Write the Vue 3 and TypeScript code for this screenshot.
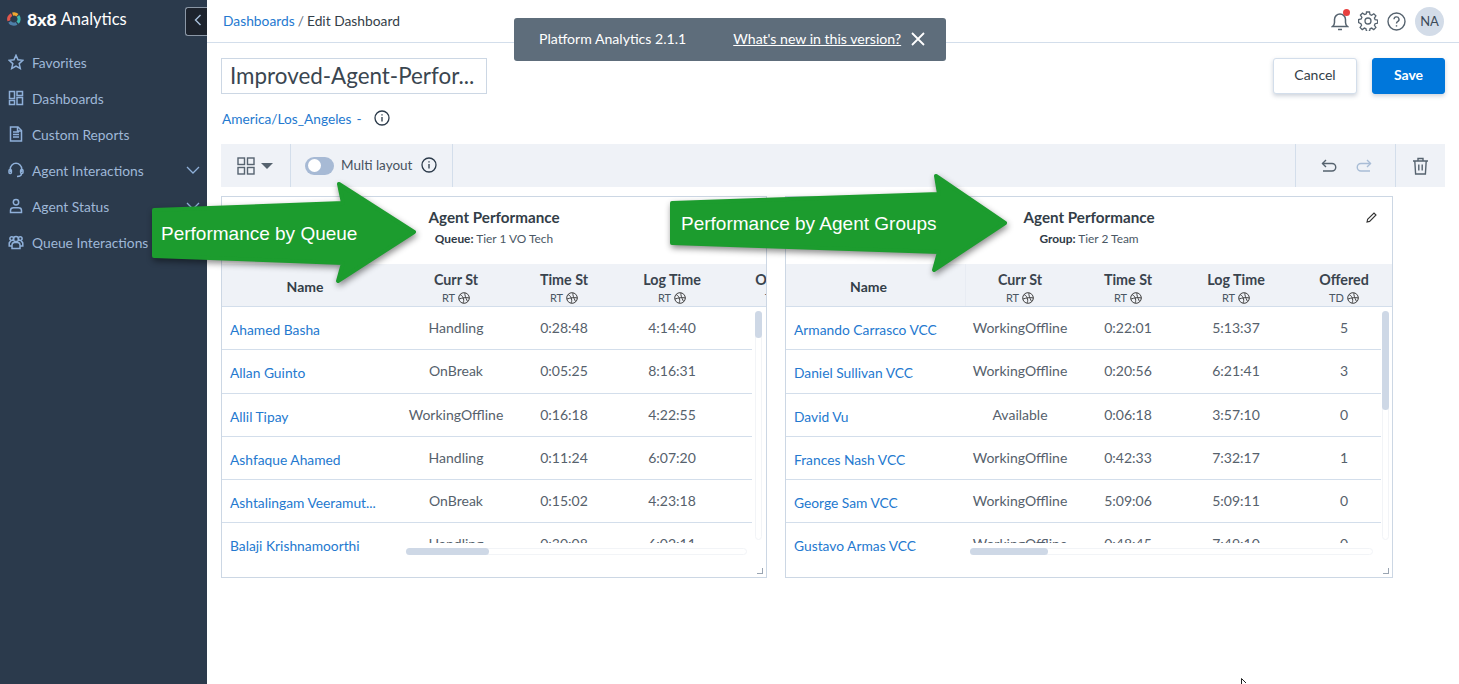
<script setup lang="ts">
type Row = { name: string; values: string[] }

interface Widget {
  id: string
  label: string
  target: string
  cols: { title: string; sub: string }[]
  rows: Row[]
  thumbH: number
  hLeft: number
  hThumb: number
  edit: boolean
}

const nav = [
  { label: 'Favorites', icon: 'star', more: false },
  { label: 'Dashboards', icon: 'grid', more: false },
  { label: 'Custom Reports', icon: 'doc', more: false },
  { label: 'Agent Interactions', icon: 'headset', more: true },
  { label: 'Agent Status', icon: 'user', more: true },
  { label: 'Queue Interactions', icon: 'users', more: false },
]

const widgets: Widget[] = [
  {
    id: 'queue',
    label: 'Queue:',
    target: 'Tier 1 VO Tech',
    cols: [
      { title: 'Curr St', sub: 'RT' },
      { title: 'Time St', sub: 'RT' },
      { title: 'Log Time', sub: 'RT' },
      { title: 'Offered', sub: 'TD' },
    ],
    rows: [
      { name: 'Ahamed Basha', values: ['Handling', '0:28:48', '4:14:40', '2'] },
      { name: 'Allan Guinto', values: ['OnBreak', '0:05:25', '8:16:31', '4'] },
      { name: 'Allil Tipay', values: ['WorkingOffline', '0:16:18', '4:22:55', '1'] },
      { name: 'Ashfaque Ahamed', values: ['Handling', '0:11:24', '6:07:20', '3'] },
      { name: 'Ashtalingam Veeramut...', values: ['OnBreak', '0:15:02', '4:23:18', '2'] },
      { name: 'Balaji Krishnamoorthi', values: ['Handling', '0:30:08', '6:02:11', '5'] },
    ],
    thumbH: 27,
    hLeft: 184,
    hThumb: 83,
    edit: false,
  },
  {
    id: 'group',
    label: 'Group:',
    target: 'Tier 2 Team',
    cols: [
      { title: 'Curr St', sub: 'RT' },
      { title: 'Time St', sub: 'RT' },
      { title: 'Log Time', sub: 'RT' },
      { title: 'Offered', sub: 'TD' },
    ],
    rows: [
      { name: 'Armando Carrasco VCC', values: ['WorkingOffline', '0:22:01', '5:13:37', '5'] },
      { name: 'Daniel Sullivan VCC', values: ['WorkingOffline', '0:20:56', '6:21:41', '3'] },
      { name: 'David Vu', values: ['Available', '0:06:18', '3:57:10', '0'] },
      { name: 'Frances Nash VCC', values: ['WorkingOffline', '0:42:33', '7:32:17', '1'] },
      { name: 'George Sam VCC', values: ['WorkingOffline', '5:09:06', '5:09:11', '0'] },
      { name: 'Gustavo Armas VCC', values: ['WorkingOffline', '0:48:45', '7:49:10', '0'] },
    ],
    thumbH: 99,
    hLeft: 184,
    hThumb: 78,
    edit: true,
  },
]
</script>

<template>
  <div class="app">
    <aside class="side">
      <div class="brand">
        <svg class="logo" width="14" height="14" viewBox="0 0 14 14" fill="none" stroke-width="3.2">
          <path d="M2 8.800A5 5 0 0 1 4.600 2.600" stroke="#e2574c" />
          <path d="M5.600 2.100A5 5 0 0 1 10.400 3.200" stroke="#f0a830" />
          <path d="M11 4A5 5 0 0 1 10.600 10.600" stroke="#3fb7b0" />
          <path d="M9.600 11.300A5 5 0 0 1 2.600 9.800" stroke="#4e7fa8" />
        </svg>
        <span class="brand-8">8x8</span>
        <span class="brand-name">Analytics</span>
      </div>
      <button class="collapse">
        <svg width="8" height="12" viewBox="0 0 8 12" fill="none" stroke="#a9c0dc" stroke-width="1.4">
          <path d="M6.500 1 1.500 6l5 5" />
        </svg>
      </button>
      <ul class="nav">
        <li v-for="item in nav" :key="item.label" class="nav-item">
          <svg class="nav-icon" width="16" height="16" viewBox="0 0 16 16" fill="none" stroke="#8fb0d9" stroke-width="1.5">
            <path v-if="item.icon === 'star'" d="M8 1.300l2 4.500 4.900.5-3.700 3.300 1.100 4.800L8 12l-4.300 2.400 1.100-4.800L1.100 6.300 6 5.800z" />
            <g v-else-if="item.icon === 'grid'">
              <rect x="1.500" y="1.500" width="5" height="7" />
              <rect x="9" y="1.500" width="5.500" height="4" />
              <rect x="1.500" y="10.500" width="5" height="4" />
              <rect x="9" y="7.500" width="5.500" height="7" />
            </g>
            <g v-else-if="item.icon === 'doc'">
              <path d="M2.500 1h7.500l3.500 3.500V15h-11z" />
              <path d="M5 6h6M5 8.500h6M5 11h6M9.500 1v4h4" />
            </g>
            <g v-else-if="item.icon === 'headset'">
              <path d="M2.300 10V7a5.700 5.700 0 0 1 11.400 0v3" />
              <rect x="1" y="7.500" width="2.400" height="4" rx="1" />
              <rect x="12.600" y="7.500" width="2.400" height="4" rx="1" />
              <path d="M13.500 11.500c0 2-2 3-4.500 3" />
            </g>
            <g v-else-if="item.icon === 'user'">
              <circle cx="8" cy="4.200" r="2.700" />
              <path d="M2.500 14.500v-2c0-1.600 1.500-2.700 3-2.700h5c1.500 0 3 1.100 3 2.700v2z" />
            </g>
            <g v-else>
              <circle cx="8" cy="5" r="2.600" />
              <circle cx="3.800" cy="4.600" r="1.900" />
              <circle cx="12.200" cy="4.600" r="1.900" />
              <path d="M4 14.500V11c0-1.500 1.200-2.600 2.600-2.600h2.800c1.400 0 2.600 1.100 2.600 2.600v3.500z" />
              <path d="M4 12H1.200V9.500c0-1.200.9-2 2-2M12 12h2.800V9.500c0-1.200-.9-2-2-2" />
            </g>
          </svg>
          <span class="nav-label">{{ item.label }}</span>
          <svg v-if="item.more" class="nav-more" width="14" height="8" viewBox="0 0 14 8" fill="none" stroke="#8fb0d9" stroke-width="1.3">
            <path d="M1 1l6 6 6-6" />
          </svg>
        </li>
      </ul>
    </aside>

    <main class="main">
      <header class="top">
        <div class="crumbs">
          <a class="link">Dashboards</a>
          <span class="slash">/</span>
          <span>Edit Dashboard</span>
        </div>
        <div class="top-icons">
          <span class="bell">
            <svg width="18" height="20" viewBox="0 0 18 20" fill="none" stroke="#56636f" stroke-width="1.5">
              <path d="M1.500 15.500c1.300-1 2-2 2-4V8.500a5.500 5.500 0 0 1 11 0v3c0 2 .7 3 2 4z" />
              <path d="M7 18.500h4" />
            </svg>
            <i class="bell-dot"></i>
          </span>
          <svg width="20" height="20" viewBox="0 0 20 20" fill="none" stroke="#56636f" stroke-width="1.3">
            <circle cx="10" cy="10" r="3" />
            <path d="M8.500 1h3l.5 2.600 1.600.7 2.200-1.500 2.100 2.100-1.500 2.200.7 1.600 2.600.5v3l-2.600.5-.7 1.600 1.500 2.200-2.100 2.100-2.200-1.500-1.600.7-.5 2.600h-3l-.5-2.600-1.600-.7-2.200 1.500-2.100-2.100 1.500-2.200-.7-1.600L.6 11.500v-3l2.600-.5.7-1.600-1.500-2.200 2.100-2.100 2.200 1.500 1.600-.7z" />
          </svg>
          <svg width="19" height="19" viewBox="0 0 19 19" fill="none" stroke="#56636f" stroke-width="1.4">
            <circle cx="9.500" cy="9.500" r="8.500" />
            <path d="M7 7.300a2.500 2.500 0 1 1 3.600 2.300c-.8.4-1.100 1-1.100 1.900" />
            <path d="M9.500 13.200v1.400" />
          </svg>
          <span class="avatar">NA</span>
        </div>
      </header>

      <div class="content">
        <div class="title-row">
          <div class="title-input">Improved-Agent-Perfor...</div>
          <div class="actions">
            <button class="btn">Cancel</button>
            <button class="btn primary">Save</button>
          </div>
        </div>

        <div class="tz">
          <a class="link">America/Los_Angeles</a>
          <span class="tz-dash">-</span>
          <svg class="info" width="16" height="16" viewBox="0 0 16 16" fill="none" stroke="#2b3a4a" stroke-width="1.3">
            <circle cx="8" cy="8" r="7" />
            <path d="M8 7v4.500M8 4.200v1.400" />
          </svg>
        </div>

        <div class="toolbar">
          <div class="tool layout">
            <svg width="18" height="18" viewBox="0 0 18 18" fill="none" stroke="#56636f" stroke-width="1.4">
              <rect x="1" y="1" width="6.500" height="6.500" />
              <rect x="10.500" y="1" width="6.500" height="6.500" />
              <rect x="1" y="10.500" width="6.500" height="6.500" />
              <rect x="10.500" y="10.500" width="6.500" height="6.500" />
            </svg>
            <i class="caret"></i>
          </div>
          <div class="tool multi">
            <span class="switch"><i></i></span>
            <span class="multi-label">Multi layout</span>
            <svg width="16" height="16" viewBox="0 0 16 16" fill="none" stroke="#2b3a4a" stroke-width="1.3">
              <circle cx="8" cy="8" r="7" />
              <path d="M8 7v4.500M8 4.200v1.400" />
            </svg>
          </div>
          <div class="tool history">
            <svg width="16" height="14" viewBox="0 0 16 14" fill="none" stroke="#56636f" stroke-width="1.4">
              <path d="M5 1 1.500 4.500 5 8" />
              <path d="M1.500 4.500H11a3.600 3.600 0 0 1 0 7.500H2" />
            </svg>
            <svg width="16" height="14" viewBox="0 0 16 14" fill="none" stroke="#a9bdd6" stroke-width="1.4">
              <path d="M11 1l3.500 3.500L11 8" />
              <path d="M14.500 4.500H5a3.600 3.600 0 0 0 0 7.500h9" />
            </svg>
          </div>
          <div class="tool trash">
            <svg width="17" height="18" viewBox="0 0 17 18" fill="none" stroke="#56636f" stroke-width="1.4">
              <path d="M1 4h15M6 4V1.500h5V4M2.800 4l.8 13h9.800l.8-13M6.800 7.500v6M10.200 7.500v6" />
            </svg>
          </div>
        </div>

        <div class="widgets">
          <section v-for="w in widgets" :key="w.id" class="widget" :class="w.id">
            <div class="w-head">
              <div class="w-title">Agent Performance</div>
              <div class="w-sub"><b>{{ w.label }}</b> {{ w.target }}</div>
              <svg v-if="w.edit" class="w-edit" width="11" height="11" viewBox="0 0 11 11" fill="none" stroke="#333" stroke-width="1.1">
                <path d="M1 10l.6-2.600L8 1l2 2-6.400 6.400z" />
              </svg>
            </div>
            <div class="t-head">
              <div class="th name-th">Name</div>
              <div v-for="c in w.cols" :key="c.title" class="th">
                <div class="th-title">{{ c.title }}</div>
                <div class="th-sub">
                  {{ c.sub }}
                  <svg width="12" height="12" viewBox="0 0 12 12" fill="none" stroke="#444" stroke-width="1">
                    <circle cx="6" cy="6" r="5.300" />
                    <path d="M2 2.500c2 .8 3 2.500 3.500 4.500S5.500 10 5 11M1 7c3-1 7-2 10.500-1M7 1c-.5 2 .5 4 2.500 8.500" />
                  </svg>
                </div>
              </div>
            </div>
            <div class="t-body">
              <div class="names">
                <div v-for="r in w.rows" :key="r.name" class="name-cell">
                  <a class="link">{{ r.name }}</a>
                </div>
              </div>
              <div class="cells">
                <div v-for="r in w.rows" :key="r.name" class="cell-row">
                  <div v-for="(v, i) in r.values" :key="i" class="cell">{{ v }}</div>
                </div>
              </div>
            </div>
            <div class="v-bar"><i :style="{ height: w.thumbH + 'px' }"></i></div>
            <div class="h-bar" :style="{ left: w.hLeft + 'px' }"><i :style="{ width: w.hThumb + 'px' }"></i></div>
            <i class="grip"></i>
          </section>
        </div>
      </div>
    </main>

    <div class="toast">
      <span>Platform Analytics 2.1.1</span>
      <a class="toast-link">What's new in this version?</a>
      <svg width="14" height="14" viewBox="0 0 14 14" fill="none" stroke="#fff" stroke-width="1.800">
        <path d="M1 1l12 12M13 1 1 13" />
      </svg>
    </div>

    <div class="arrow arrow-queue">
      <svg width="275" height="112" viewBox="0 0 275 112">
        <path fill="#1c9c2e" stroke="#1c9c2e" stroke-width="4" stroke-linejoin="round" d="M3 29 192 22 188 3 263 51 187 100 192 82 3 75z" />
      </svg>
      <span>Performance by Queue</span>
    </div>
    <div class="arrow arrow-group">
      <svg width="350" height="107" viewBox="0 0 350 107">
        <path fill="#1c9c2e" stroke="#1c9c2e" stroke-width="4" stroke-linejoin="round" d="M3 30 270 21 267 3 336 50 265 97 270 79 3 70z" />
      </svg>
      <span>Performance by Agent Groups</span>
    </div>

    <svg class="cursor" width="8" height="6" viewBox="0 0 8 6" fill="#fff" stroke="#222" stroke-width="1">
      <path d="M.5.500v5.500M.5.500 5 5" />
    </svg>
  </div>
</template>

<style>
html,
body {
  margin: 0;
  background: #fff;
  overflow: hidden;
}
</style>

<style scoped>
.app {
  position: relative;
  display: flex;
  width: 1459px;
  height: 684px;
  overflow: hidden;
  font-family: Lato, "Noto Sans", sans-serif;
  font-size: 14px;
  color: #333e48;
}

a {
  text-decoration: none;
}

.link {
  color: #2479cf;
}

.side {
  position: relative;
  flex: 0 0 207px;
  background: #2b3a4c;
  color: #9fb8d8;
}

.brand {
  display: flex;
  align-items: center;
  height: 38px;
  padding-left: 7px;
  color: #fff;
}

.brand-8 {
  margin-left: 6px;
  font-size: 17.500px;
  font-weight: 900;
}

.brand-name {
  margin-left: 4px;
  font-size: 16.500px;
}

.collapse {
  position: absolute;
  top: 7px;
  left: 185px;
  width: 22px;
  height: 29px;
  padding: 0 0 0 2px;
  background: #1d232d;
  border: 1px solid #8b97a6;
  border-right: 0;
  border-radius: 3px 0 0 3px;
}

.nav {
  list-style: none;
  margin: 6px 0 0;
  padding: 0;
}

.nav-item {
  display: flex;
  align-items: center;
  height: 36px;
  padding: 0 7px 0 8px;
}

.nav-label {
  margin-left: 8px;
  flex: 1;
  font-size: 13.800px;
  white-space: nowrap;
}

.main {
  flex: 1;
  min-width: 0;
}

.top {
  display: flex;
  align-items: center;
  justify-content: space-between;
  box-sizing: content-box;
  height: 42px;
  padding: 0 15px 0 16px;
  border-bottom: 1px solid #d3deeb;
  font-size: 13.800px;
}

.crumbs {
  margin-bottom: 2px;
}

.slash {
  margin: 0 3px;
  color: #66727e;
}

.top-icons {
  display: flex;
  align-items: center;
  gap: 9px;
}

.bell {
  position: relative;
  display: flex;
}

.bell-dot {
  position: absolute;
  top: -2px;
  right: -1px;
  width: 7px;
  height: 7px;
  border-radius: 50%;
  background: #e8403f;
}

.avatar {
  display: flex;
  align-items: center;
  justify-content: center;
  width: 29px;
  height: 29px;
  border-radius: 50%;
  background: #d3dce8;
  font-size: 13px;
  color: #3c4a58;
}

.content {
  padding: 15px 14px 0;
}

.title-row {
  display: flex;
  justify-content: space-between;
  align-items: flex-start;
}

.title-input {
  box-sizing: border-box;
  width: 266px;
  height: 36px;
  padding-left: 8px;
  border: 1px solid #ccd7e4;
  font-size: 22.400px;
  line-height: 34px;
  white-space: nowrap;
  color: #3a4650;
}

.actions {
  display: flex;
  gap: 15px;
}

.btn {
  width: 84px;
  height: 36px;
  padding: 0 0 3px;
  border: 1px solid #d3deeb;
  border-radius: 3px;
  background: #fff;
  box-shadow: 0 2px 4px rgba(60, 80, 110, 0.25);
  font: inherit;
  color: #333e48;
}

.btn.primary {
  width: 73px;
  border-color: #0077db;
  background: #0077db;
  color: #fff;
  font-weight: 700;
}

.tz {
  display: flex;
  align-items: center;
  height: 20px;
  margin-top: 14px;
  padding-left: 1px;
  font-size: 13.700px;
}

.tz-dash {
  margin-left: 5px;
  color: #2479cf;
}

.info {
  margin-left: 12px;
}

.toolbar {
  display: flex;
  align-items: center;
  height: 43px;
  margin-top: 16px;
  background: #eff2f7;
}

.tool {
  display: flex;
  align-items: center;
  height: 100%;
}

.layout {
  width: 70px;
  gap: 6px;
  padding-left: 16px;
  box-sizing: border-box;
  border-right: 1px solid #d3deeb;
}

.caret {
  width: 0;
  height: 0;
  border: 6px solid transparent;
  border-top: 6px solid #56636f;
  border-bottom: 0;
}

.multi {
  width: 162px;
  padding: 0 0 2px 14px;
  box-sizing: border-box;
  border-right: 1px solid #d3deeb;
}

.switch {
  display: flex;
  align-items: center;
  width: 29px;
  height: 18px;
  margin-top: 2px;
  border-radius: 9px;
  background: #a7bad5;
}

.switch i {
  width: 13px;
  height: 13px;
  margin-left: 3px;
  border-radius: 50%;
  background: #fff;
}

.multi-label {
  margin: 0 9px 0 7px;
  font-size: 13.500px;
  white-space: nowrap;
  color: #47535f;
}

.history {
  margin-left: auto;
  gap: 19px;
  padding: 0 23px 0 25px;
  border-left: 1px solid #d3deeb;
}

.trash {
  padding: 0 16px;
  border-left: 1px solid #d3deeb;
}

.widgets {
  display: flex;
  gap: 18px;
  margin-top: 9px;
}

.widget {
  position: relative;
  box-sizing: border-box;
  height: 382px;
  border: 1px solid #ccd7e4;
  overflow: hidden;
}

.widget.queue {
  width: 546px;
}

.widget.group {
  width: 608px;
}

.w-head {
  position: relative;
  height: 67px;
  padding-top: 11px;
  box-sizing: border-box;
  text-align: center;
}

.w-title {
  font-size: 15.200px;
  font-weight: 700;
  line-height: 18px;
}

.w-sub {
  margin-top: 5px;
  font-size: 11.900px;
  color: #4a5764;
}

.w-sub b {
  color: #2f3a46;
}

.w-edit {
  position: absolute;
  top: 15px;
  right: 15px;
}

.t-head {
  display: flex;
  height: 43px;
  box-sizing: border-box;
  background: #eff2f7;
  border-bottom: 1px solid #d3deeb;
  white-space: nowrap;
}

.th {
  flex: 0 0 108px;
  text-align: center;
  padding-top: 8px;
  box-sizing: border-box;
}

.th-title {
  font-size: 14.300px;
  line-height: 16px;
  font-weight: 700;
  color: #3a444e;
}

.th-sub {
  display: flex;
  justify-content: center;
  align-items: center;
  gap: 3px;
  margin-top: 3px;
  font-size: 11px;
  color: #4a5764;
}

.name-th {
  flex: 0 0 180px;
  padding: 0 14px 0 0;
  line-height: 46px;
  font-size: 14px;
  font-weight: 700;
}

.group .name-th {
  border-right: 1px solid #e8ecf3;
}

.t-body {
  display: flex;
  align-items: flex-start;
}

.names {
  flex: 0 0 180px;
  height: 248px;
  overflow: hidden;
}

.name-cell {
  box-sizing: border-box;
  height: 43.300px;
  padding: 14px 0 0 8px;
  border-bottom: 1px solid #d3deeb;
  font-size: 13.800px;
  white-space: nowrap;
  line-height: 18px;
}

.cells {
  width: 350px;
  height: 236px;
  overflow: hidden;
}

.group .cells {
  width: 415px;
}

.cell-row {
  display: flex;
  box-sizing: border-box;
  height: 43.300px;
  border-bottom: 1px solid #d3deeb;
}

.cell {
  flex: 0 0 108px;
  line-height: 41px;
  text-align: center;
  white-space: nowrap;
  color: #56616c;
}

.v-bar {
  position: absolute;
  top: 114px;
  right: 4px;
  width: 7px;
  height: 229px;
  border: 1px solid #f2f4f7;
  box-sizing: border-box;
  border-radius: 4px;
}

.group .v-bar {
  right: 3px;
}

.v-bar i {
  display: block;
  margin: -1px;
  width: 7px;
  background: #ced8e6;
  border-radius: 4px;
}

.h-bar {
  position: absolute;
  top: 351px;
  right: 19px;
  height: 7px;
  box-sizing: border-box;
  border: 1px solid #f2f4f7;
  border-radius: 4px;
}

.h-bar i {
  display: block;
  margin: -1px;
  height: 7px;
  background: #ced8e6;
  border-radius: 4px;
}

.grip {
  position: absolute;
  right: 3px;
  bottom: 3px;
  width: 5px;
  height: 5px;
  border-right: 1px solid #9aa5b2;
  border-bottom: 1px solid #9aa5b2;
}

.toast {
  position: absolute;
  top: 18px;
  left: 514px;
  display: flex;
  align-items: center;
  box-sizing: border-box;
  width: 432px;
  height: 43px;
  padding: 0 0 2px 25px;
  border-radius: 3px;
  background: #5e6d7b;
  color: #fff;
  font-size: 14.100px;
}

.toast-link {
  margin: 0 10px 0 47px;
  color: #fff;
  text-decoration: underline;
}

.arrow {
  position: absolute;
  color: #fff;
  font-family: "Liberation Sans", Arial, sans-serif;
  font-size: 19px;
  white-space: nowrap;
}

.arrow svg {
  display: block;
  filter: drop-shadow(1px 3px 3px rgba(0, 0, 0, 0.45));
  overflow: visible;
}

.arrow span {
  position: absolute;
  left: 10px;
}

.arrow-queue {
  top: 181px;
  left: 151px;
}

.arrow-queue span {
  top: 42px;
}

.arrow-group {
  top: 173px;
  left: 669px;
}

.arrow-group span {
  left: 12px;
  top: 40px;
}

.cursor {
  position: absolute;
  left: 1241px;
  top: 678px;
}
</style>
